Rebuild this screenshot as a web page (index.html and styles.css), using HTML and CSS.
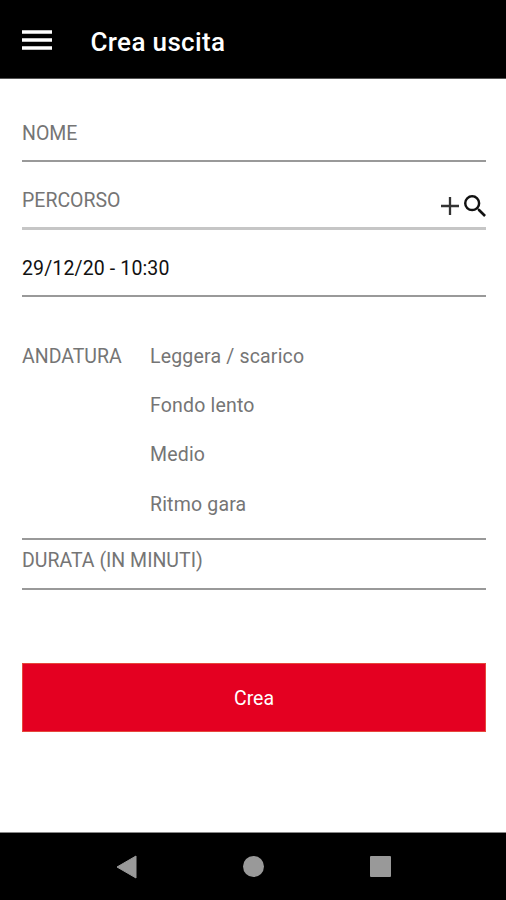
FILE: index.html
```html
<!DOCTYPE html>
<html lang="it">
<head>
<meta charset="utf-8">
<title>Crea uscita</title>
<link rel="stylesheet" href="styles.css">
</head>
<body>
<header class="topbar">
  <svg class="menu" width="30" height="21" viewBox="0 0 30 21"><path d="M0 2h30M0 10h30M0 18h30" stroke="#fff" stroke-width="3.7"/></svg>
  <h1 class="title">Crea uscita</h1>
</header>
<main class="form">
  <div class="field name"><span>NOME</span></div>
  <div class="field route"><span>PERCORSO</span>
    <div class="actions">
      <svg width="18" height="18" viewBox="0 0 18 18"><path d="M9 0v18M0 9h18" stroke="#333" stroke-width="2.3"/></svg>
      <svg width="22" height="22" viewBox="3 3 17.5 17.5"><path fill="#111" d="M15.5 14h-.79l-.28-.27A6.47 6.47 0 0 0 16 9.5 6.5 6.5 0 1 0 9.5 16c1.61 0 3.09-.59 4.23-1.57l.27.28v.79l5 4.99L20.49 19l-4.99-5zm-6 0C7.01 14 5 11.99 5 9.5S7.01 5 9.5 5 14 7.01 14 9.5 11.99 14 9.5 14z"/></svg>
    </div>
  </div>
  <div class="field date"><span>29/12/20 - 10:30</span></div>
  <div class="pace">
    <span class="pace-label">ANDATURA</span>
    <div class="options"><span>Leggera / scarico</span><span>Fondo lento</span><span>Medio</span><span>Ritmo gara</span></div>
  </div>
  <div class="field duration"><span>DURATA (IN MINUTI)</span></div>
  <button class="submit">Crea</button>
</main>
<nav class="navbar">
  <svg width="21" height="24" viewBox="0 0 21 24"><path d="M1 12L20 1v22z" fill="#999" stroke="#999" stroke-linejoin="round"/></svg>
  <svg width="21" height="21" viewBox="0 0 21 21"><circle cx="10.5" cy="10.5" r="10.5" fill="#999"/></svg>
  <svg width="21" height="21" viewBox="0 0 21 21"><rect width="21" height="21" rx="1" fill="#999"/></svg>
</nav>
</body>
</html>
```

FILE: styles.css
```css
* { box-sizing: border-box; }
body { margin: 0; height: 900px; display: flex; flex-direction: column; background: #fff; color: #757575; font: 19.5px/24px Roboto, sans-serif; overflow: hidden; }
.topbar { height: 79px; background: #000; border-bottom: 1px solid #555; display: flex; align-items: center; padding: 5px 21.5px 0; gap: 39px; }
.menu { flex: none; margin-top: -2px; }
.title { margin: 0; color: #fff; font-size: 26px; font-weight: 500; line-height: 32px; letter-spacing: 0.35px; }
.form { flex: 1; padding: 0 20px 0 22px; }
.field { display: flex; justify-content: space-between; border-bottom: 2px solid #999; }
.name { height: 83px; padding-top: 43px; }
.route { height: 68px; padding-top: 27px; border-bottom: 3px solid #c6c6c6; }
.actions { display: flex; align-items: center; gap: 5px; height: 34px; }
.date { height: 67px; padding-top: 27px; color: #111; letter-spacing: 0.13px; }
.pace { height: 243px; padding-top: 48px; display: flex; border-bottom: 2px solid #999; }
.pace-label { width: 128px; }
.options { display: flex; flex-direction: column; gap: 25.2px; letter-spacing: 0.18px; }
.duration { height: 50px; padding-top: 9px; }
.submit { display: block; width: 100%; height: 69px; margin: 73px 0 0; padding: 2px 0 0; border: 1px solid #e5483c; background: #e40021; color: #fff; font: 19.5px Roboto, sans-serif; }
.navbar { height: 68px; background: #000; border-top: 1px solid #888; display: flex; align-items: center; justify-content: center; gap: 106px; }
```
